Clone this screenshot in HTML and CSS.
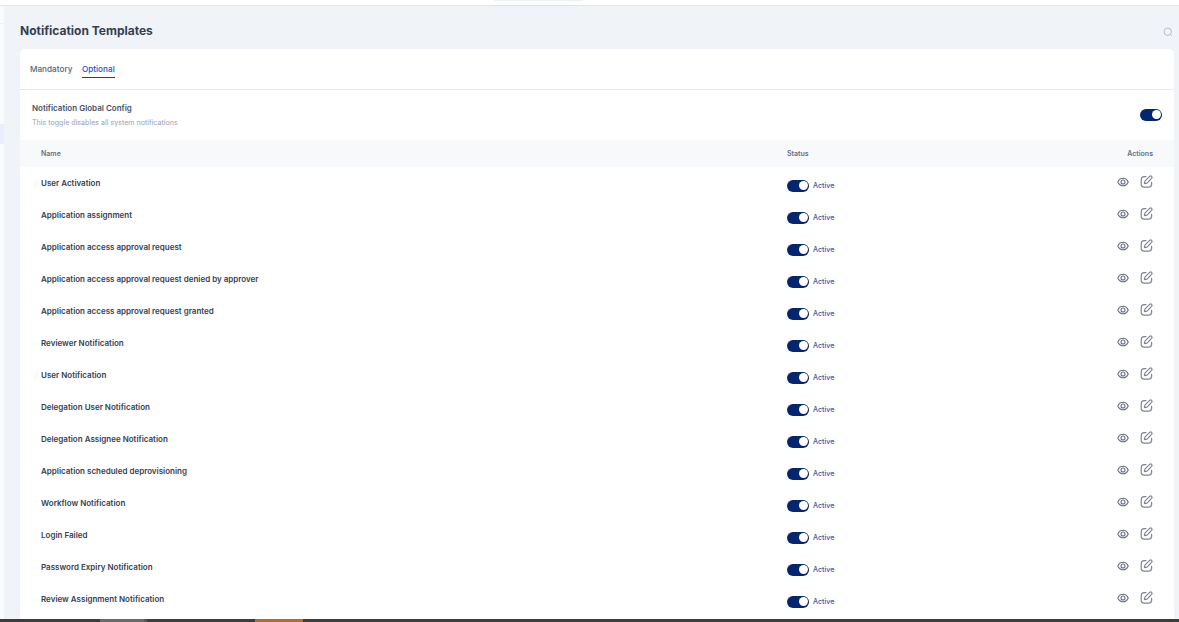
FILE: index.html
```html
<!DOCTYPE html>
<html lang="en">
<head>
<meta charset="utf-8">
<title>Notification Templates</title>
<link rel="stylesheet" href="styles.css">
</head>
<body>
<svg class="defs" width="0" height="0" aria-hidden="true">
  <symbol id="eye" viewBox="0 0 12 12"><path d="M.8 6C1.900 3.400 3.700 2.200 6 2.200s4.100 1.200 5.200 3.800C10.100 8.600 8.300 9.800 6 9.800S1.900 8.600.8 6Z" fill="none" stroke="currentColor" stroke-width="1.100"/><circle cx="6" cy="6" r="2" fill="none" stroke="currentColor" stroke-width="1.100"/></symbol>
  <symbol id="edit" viewBox="0 0 14 14"><path d="M6.300 1.800H4.400C2.500 1.800 1.300 3 1.300 4.900v5c0 1.900 1.200 3.100 3.100 3.100h5c1.900 0 3.100-1.200 3.100-3.100V7.800" fill="none" stroke="currentColor" stroke-width="1.300" stroke-linecap="round"/><path d="M4.800 9.300 5.200 6.600 10.300 1.500c.8-.8 1.500-.8 2.200 0 .7.700.7 1.400 0 2.100L7.500 8.800Z" fill="none" stroke="currentColor" stroke-width="1.200" stroke-linejoin="round"/></symbol>
</svg>
<div class="app">
  <div class="topbar"><span class="top-pill"></span></div>
  <div class="middle">
    <aside class="rail"><span class="rail-line"></span><span class="rail-active"></span></aside>
    <main class="main">
      <header class="page-head">
        <h1>Notification Templates</h1>
        <svg class="search" viewBox="0 0 10 10"><circle cx="4.700" cy="4.700" r="3.700"/><path d="m7.500 7.500 1.500 1.500"/></svg>
      </header>
      <section class="card">
        <nav class="tabs">
          <span class="tab">Mandatory</span>
          <span class="tab current">Optional</span>
        </nav>
        <div class="global">
          <div>
            <div class="global-title">Notification Global Config</div>
            <div class="global-sub">This toggle disables all system notifications</div>
          </div>
          <span class="toggle big"></span>
        </div>
        <div class="thead row-grid">
          <span>Name</span><span>Status</span><span class="right">Actions</span>
        </div>
        <div class="row row-grid"><span class="name">User Activation</span><span class="status"><span class="toggle"></span><span class="active">Active</span></span><span class="actions"><svg class="eye"><use href="#eye"/></svg><svg class="edit"><use href="#edit"/></svg></span></div>
        <div class="row row-grid"><span class="name">Application assignment</span><span class="status"><span class="toggle"></span><span class="active">Active</span></span><span class="actions"><svg class="eye"><use href="#eye"/></svg><svg class="edit"><use href="#edit"/></svg></span></div>
        <div class="row row-grid"><span class="name">Application access approval request</span><span class="status"><span class="toggle"></span><span class="active">Active</span></span><span class="actions"><svg class="eye"><use href="#eye"/></svg><svg class="edit"><use href="#edit"/></svg></span></div>
        <div class="row row-grid"><span class="name">Application access approval request denied by approver</span><span class="status"><span class="toggle"></span><span class="active">Active</span></span><span class="actions"><svg class="eye"><use href="#eye"/></svg><svg class="edit"><use href="#edit"/></svg></span></div>
        <div class="row row-grid"><span class="name">Application access approval request granted</span><span class="status"><span class="toggle"></span><span class="active">Active</span></span><span class="actions"><svg class="eye"><use href="#eye"/></svg><svg class="edit"><use href="#edit"/></svg></span></div>
        <div class="row row-grid"><span class="name">Reviewer Notification</span><span class="status"><span class="toggle"></span><span class="active">Active</span></span><span class="actions"><svg class="eye"><use href="#eye"/></svg><svg class="edit"><use href="#edit"/></svg></span></div>
        <div class="row row-grid"><span class="name">User Notification</span><span class="status"><span class="toggle"></span><span class="active">Active</span></span><span class="actions"><svg class="eye"><use href="#eye"/></svg><svg class="edit"><use href="#edit"/></svg></span></div>
        <div class="row row-grid"><span class="name">Delegation User Notification</span><span class="status"><span class="toggle"></span><span class="active">Active</span></span><span class="actions"><svg class="eye"><use href="#eye"/></svg><svg class="edit"><use href="#edit"/></svg></span></div>
        <div class="row row-grid"><span class="name">Delegation Assignee Notification</span><span class="status"><span class="toggle"></span><span class="active">Active</span></span><span class="actions"><svg class="eye"><use href="#eye"/></svg><svg class="edit"><use href="#edit"/></svg></span></div>
        <div class="row row-grid"><span class="name">Application scheduled deprovisioning</span><span class="status"><span class="toggle"></span><span class="active">Active</span></span><span class="actions"><svg class="eye"><use href="#eye"/></svg><svg class="edit"><use href="#edit"/></svg></span></div>
        <div class="row row-grid"><span class="name">Workflow Notification</span><span class="status"><span class="toggle"></span><span class="active">Active</span></span><span class="actions"><svg class="eye"><use href="#eye"/></svg><svg class="edit"><use href="#edit"/></svg></span></div>
        <div class="row row-grid"><span class="name">Login Failed</span><span class="status"><span class="toggle"></span><span class="active">Active</span></span><span class="actions"><svg class="eye"><use href="#eye"/></svg><svg class="edit"><use href="#edit"/></svg></span></div>
        <div class="row row-grid"><span class="name">Password Expiry Notification</span><span class="status"><span class="toggle"></span><span class="active">Active</span></span><span class="actions"><svg class="eye"><use href="#eye"/></svg><svg class="edit"><use href="#edit"/></svg></span></div>
        <div class="row row-grid"><span class="name">Review Assignment Notification</span><span class="status"><span class="toggle"></span><span class="active">Active</span></span><span class="actions"><svg class="eye"><use href="#eye"/></svg><svg class="edit"><use href="#edit"/></svg></span></div>
      </section>
    </main>
  </div>
  <footer class="taskbar"><span class="seg-a"></span><span class="seg-b"></span><span class="seg-c"></span></footer>
</div>
</body>
</html>
```
FILE: styles.css
```css
* { box-sizing: border-box; }
html, body { margin: 0; height: 100%; overflow: hidden; }
body { font-family: Inter, "Noto Sans", sans-serif; background: #fff; color: #2f3a4f; }
.defs { position: absolute; }
.app { display: flex; flex-direction: column; height: 622px; }

.topbar { flex: none; height: 6px; background: #fff; border-bottom: 1px solid #e1e4ec; display: flex; padding-left: 494px; }
.top-pill { width: 89px; height: 1px; background: #eef1f8; border-radius: 0 0 4px 4px; }

.middle { flex: 1; min-height: 0; display: flex; overflow: hidden; }
.rail { flex: none; width: 4px; background: #fafbfd; display: flex; flex-direction: column; padding-top: 17px; }
.rail-line { height: 1px; background: #eef0f5; }
.rail-active { height: 20px; margin-top: 100px; background: #eaeefb; }

.main { flex: 1; min-width: 0; background: #f0f3f8; padding: 0 5px 0 16px; }
.page-head { height: 43px; display: flex; align-items: center; justify-content: space-between; padding-top: 6px; margin-right: 1px; }
.page-head h1 { margin: 0; font-size: 12px; font-weight: 700; color: #333e52; }
.search { width: 10px; height: 10px; margin-top: 3px; fill: none; stroke: #a9b0bd; stroke-width: .8; }

.card { background: #fff; border-radius: 5px 5px 0 0; height: 600px; }
.tabs { height: 41px; display: flex; gap: 9.500px; padding-left: 10px; border-bottom: 1px solid #e3e6ee; }
.tab { font-size: 8.200px; font-weight: 500; height: 30px; padding-top: 15px; line-height: 11px; color: #5b6578; }
.tab.current { color: #1d4fd1; border-bottom: 1px solid #0b3fc4; height: 29px; }

.global { height: 50px; display: flex; align-items: center; justify-content: space-between; padding: 0 12px; }
.global-title { font-size: 8px; font-weight: 600; line-height: 11px; color: #465064; }
.global-sub { font-size: 7.100px; line-height: 10px; margin-top: 4px; color: #98a2b3; }

.row-grid { display: grid; grid-template-columns: 746px 1fr 110px; align-items: center; padding: 0 21px; }
.thead { height: 27px; background: #f8f9fb; font-size: 7px; font-weight: 600; color: #667085; }
.right { text-align: right; }
.row { height: 32px; }
.name { font-size: 8px; font-weight: 600; color: #344054; margin-top: -1px; }
.status { display: flex; align-items: center; gap: 4px; margin-top: 5px; }
.active { font-size: 7.100px; font-weight: 500; color: #3a55a8; }
.actions { display: flex; justify-content: flex-end; align-items: center; gap: 11px; color: #7d8594; margin-top: -3px; }
.eye { width: 12px; height: 12px; margin-top: 1px; color: #667085; }
.edit { width: 13px; height: 13px; }

.toggle { display: block; flex: none; width: 22px; height: 12px; border-radius: 6px; background: #04266f; position: relative; }
.toggle::after { content: ""; position: absolute; top: 1.500px; right: 1.500px; width: 9px; height: 9px; border-radius: 50%; background: #fff; }
.toggle.big { margin-top: -1px; }

.taskbar { flex: none; height: 3px; background: #3c3c3c; display: flex; }
.seg-a { width: 44px; margin-left: 100px; background: #6a6a6a; }
.seg-b { width: 3px; background: #555; }
.seg-c { width: 48px; margin-left: 108px; background: #b56a2e; }
```
